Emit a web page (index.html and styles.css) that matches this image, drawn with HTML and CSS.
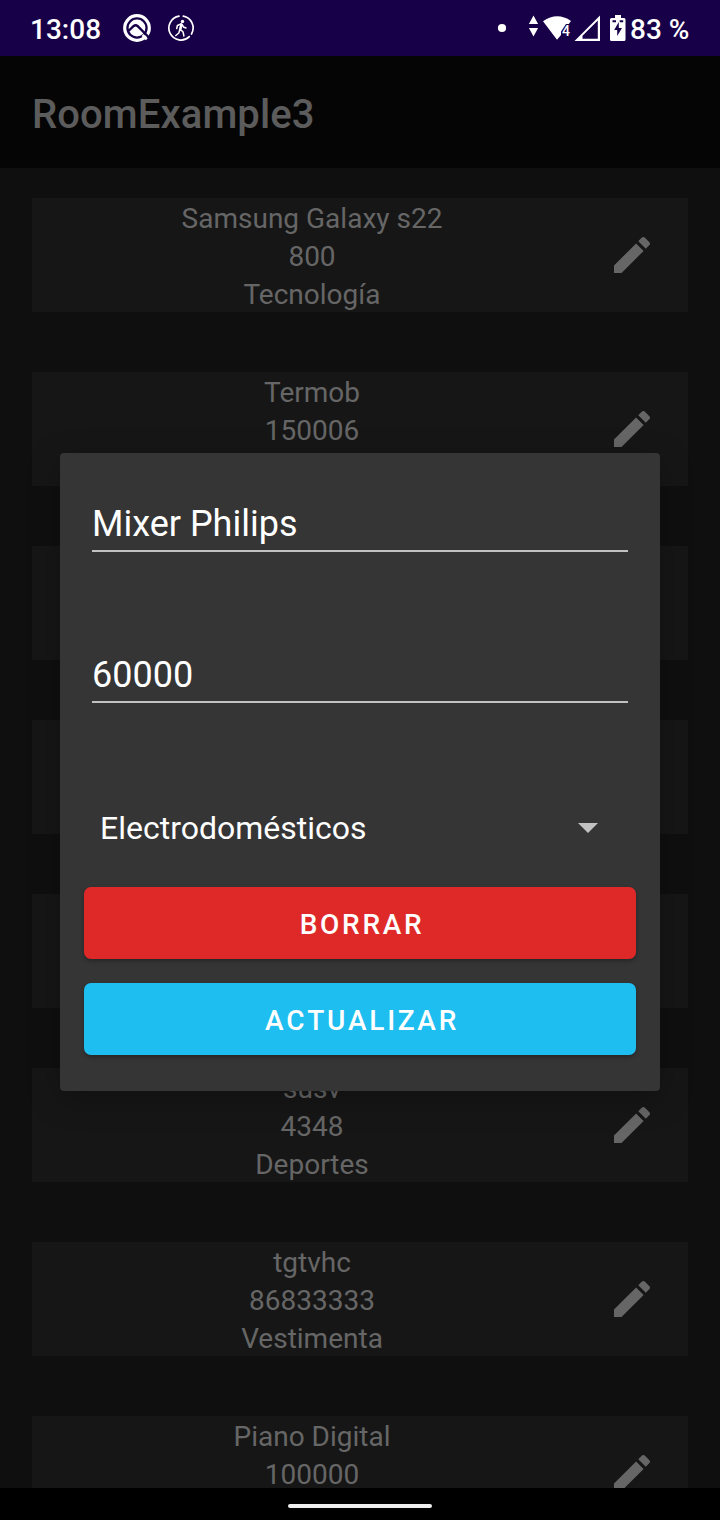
FILE: index.html
```html
<!DOCTYPE html>
<html lang="es">
<head>
<meta charset="utf-8">
<title>RoomExample3</title>
<link rel="stylesheet" href="styles.css">
</head>
<body>
<svg class="defs" width="0" height="0" aria-hidden="true">
  <symbol id="edit" viewBox="0 0 24 24"><path d="M3 17.25V21h3.75L17.81 9.94l-3.75-3.75L3 17.25zM20.71 7.04c.39-.39.39-1.02 0-1.41l-2.34-2.34c-.39-.39-1.02-.39-1.41 0l-1.83 1.83 3.75 3.75 1.83-1.83z"/></symbol>
</svg>
<div class="screen">
  <header class="status">
    <span class="clock">13:08</span>
    <svg class="notifications" width="74" height="30" viewBox="122 13 74 30">
      <circle cx="137" cy="28" r="12.3" fill="none" stroke="#fff" stroke-width="3.2"/>
      <circle cx="137" cy="28" r="8.400" fill="#fff"/>
      <path d="M128.500 31l5.200-5q2-1.600 4 .2L149 37.500" fill="none" stroke="#180048" stroke-width="2.400"/>
      <path d="M142.500 35l4.200 4.300" stroke="#fff" stroke-width="2.600"/>
      <g fill="none" stroke="#fff" stroke-linecap="round" stroke-linejoin="round">
        <path d="M183.300 16.200A12 12 0 0 1 191.500 34M189.300 36.600A12 12 0 1 1 179 16.200" stroke-width="1.700"/>
        <path d="M181.400 24l-1.500 5 3.200 3 .8 4M179.800 29.500l-1 3.500-3 2.500M181 24l-3.600 1.500-.7 3M182 24.500l1.500 2.500 2.500 1" stroke-width="1.500"/>
      </g>
      <circle cx="182.500" cy="21.500" r="1.700" fill="#fff"/>
      <path d="M180.300 23.300l2.200.6-.8 5.600-2.400-.3z" fill="#fff"/>
    </svg>
    <svg class="signals" width="132" height="30" viewBox="496 13 132 30" fill="#fff">
      <circle cx="502" cy="28" r="4.100"/>
      <path d="M533.500 15.500l4.600 8.500h-9.200zM533.500 36.500l4.600-8.500h-9.200z"/>
      <path d="M543 21.300Q557 11.500 571 20.900L568.800 24H566L561 31.500V35L557 39.700z"/>
      <text class="wifi-gen" x="562" y="36">4</text>
      <path fill-rule="evenodd" d="M574.500 41L600 15.500V41zM582.500 38.800H597.800V20.500L582.500 35.800z"/>
      <path fill-rule="evenodd" d="M610 19.500q0-1.500 1.500-1.500h3.500v-3h6v3h3q1.500 0 1.500 1.500v20q0 1.500-1.500 1.500h-12.500q-1.500 0-1.500-1.500z"/>
      <path d="M612.500 20.300h3.500v2h-3.500zM619.700 20.300h3.500v2h-3.500zM618.800 22l-4.600 8h3v6l4.800-8h-3.200z" fill="#180048"/>
    </svg>
    <span class="battery">83 %</span>
  </header>
  <div class="appbar"><h1 class="title">RoomExample3</h1></div>
  <main class="list">
    <article class="item"><div class="info"><span>Samsung Galaxy s22</span><span>800</span><span>Tecnología</span></div><svg class="edit"><use href="#edit"/></svg></article>
    <article class="item"><div class="info"><span>Termob</span><span>150006</span></div><svg class="edit"><use href="#edit"/></svg></article>
    <article class="item"></article>
    <article class="item"></article>
    <article class="item"></article>
    <article class="item"><div class="info"><span>susv</span><span>4348</span><span>Deportes</span></div><svg class="edit"><use href="#edit"/></svg></article>
    <article class="item"><div class="info"><span>tgtvhc</span><span>86833333</span><span>Vestimenta</span></div><svg class="edit"><use href="#edit"/></svg></article>
    <article class="item"><div class="info"><span>Piano Digital</span><span>100000</span></div><svg class="edit"><use href="#edit"/></svg></article>
  </main>
  <footer class="navbar"><div class="handle"></div></footer>
  <section class="dialog">
    <div class="field">Mixer Philips</div>
    <div class="field field-price">60000</div>
    <div class="spinner"><span>Electrodomésticos</span><svg width="20" height="10" viewBox="0 0 20 10"><path d="M0 0h20L10 10z" fill="#c2c2c2"/></svg></div>
    <button class="button delete">BORRAR</button>
    <button class="button update">ACTUALIZAR</button>
  </section>
</div>
</body>
</html>
```
FILE: styles.css
```css
* { box-sizing: border-box; }
body { margin: 0; background: #000; font-family: Roboto, sans-serif; }
.defs { display: block; }
.screen { position: relative; display: flex; flex-direction: column; width: 720px; height: 1520px; overflow: hidden; background: #0f0f0f; }
.status { display: flex; align-items: center; flex: none; height: 56px; padding: 0 31px 0 30px; background: #180048; color: #fff; font-size: 28px; font-weight: 500; }
.clock { width: 92px; padding-top: 3px; }
.notifications { flex: none; }
.signals { flex: none; margin-left: auto; }
.battery { width: 61px; padding: 3px 0 0 2px; white-space: nowrap; }
.wifi-gen { font-size: 14px; font-weight: 500; }
.appbar { display: flex; align-items: center; flex: none; height: 112px; padding: 6px 32px 0; background: #050505; }
.title { margin: 0; color: #5c5c5c; font-size: 40px; font-weight: 500; line-height: 48px; letter-spacing: 0.1px; }
.list { display: flex; flex-direction: column; gap: 60px; flex: 1; min-height: 0; overflow: hidden; padding: 30px 32px 0; }
.item { display: flex; align-items: center; flex: none; height: 114px; background: #161616; }
.info { display: flex; flex-direction: column; align-items: center; align-self: flex-start; width: 560px; padding-top: 2px; color: #666; font-size: 28px; line-height: 38px; }
.edit { width: 48px; height: 48px; margin-left: 16px; fill: #666; }
.navbar { display: flex; align-items: center; justify-content: center; flex: none; height: 32px; padding-top: 4px; background: #000; }
.handle { width: 144px; height: 4px; border-radius: 2px; background: #eee; }
.dialog { position: absolute; left: 60px; top: 453px; display: flex; flex-direction: column; width: 600px; height: 638px; padding: 40px 24px 36px; border-radius: 4px; background: #353535; color: #fff; box-shadow: 0 8px 32px rgba(0, 0, 0, 0.25); }
.field { height: 59px; margin: 0 8px; padding-top: 9px; border-bottom: 2px solid #c2c2c2; font-size: 36px; line-height: 44px; }
.field-price { margin-top: 92px; }
.spinner { display: flex; align-items: center; justify-content: space-between; height: 48px; margin: 101px 38px 35px 16px; font-size: 32px; }
.button { display: flex; align-items: center; justify-content: center; height: 72px; border: 0; border-radius: 7px; padding: 3px 0 0 4px; color: #fff; font: 500 28px Roboto, sans-serif; font-kerning: none; letter-spacing: 2.7px; box-shadow: 0 2px 4px rgba(0, 0, 0, 0.3); }
.delete { background: #df2928; }
.update { margin-top: 24px; background: #1ebef0; }
```
